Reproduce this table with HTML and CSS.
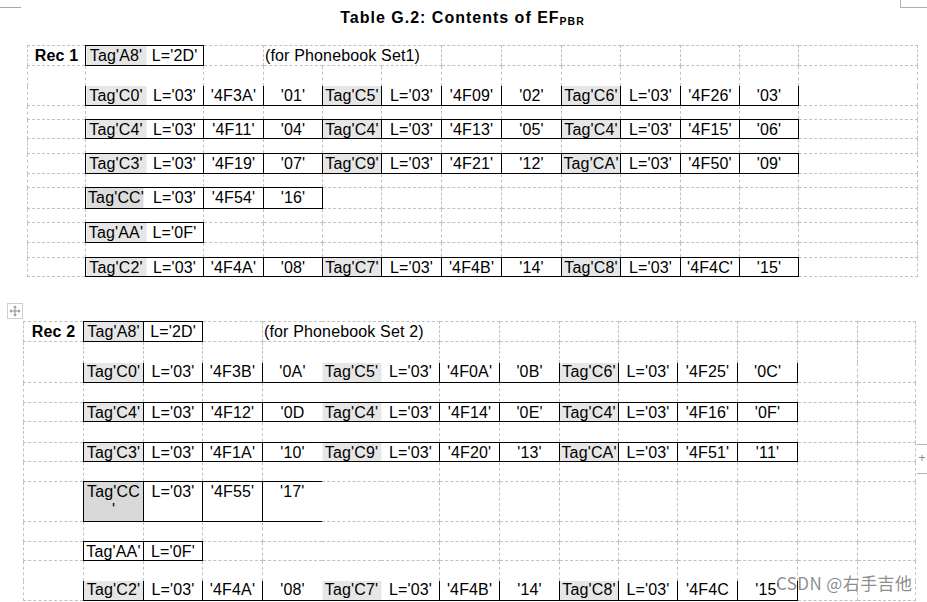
FILE: index.html
```html
<!DOCTYPE html>
<html>
<head>
<meta charset="utf-8">
<title>Table G.2</title>
<link rel="stylesheet" href="styles.css">
</head>
<body>
<div class="page">
  <div class="corner-tl"></div>
  <div class="corner-tr"></div>
  <h1 class="title">Table G.2: Contents of EF<sub>PBR</sub></h1>

  <table class="grid rec1">
    <colgroup>
      <col class="c58"><col class="c118"><col class="c60"><col class="c59"><col class="c59"><col class="c60"><col class="c60"><col class="c60"><col class="c59"><col class="c60"><col class="c59"><col class="c59"><col class="c119">
    </colgroup>
    <tr class="h20"><td class="lbl">Rec 1</td><td class="s dual"><span class="seg a">Tag'A8'</span><span class="seg b">L='2D'</span></td><td></td><td colspan="3" class="note">(for Phonebook Set1)</td><td></td><td></td><td></td><td></td><td></td><td></td><td></td></tr>
    <tr class="h20"><td></td><td></td><td></td><td></td><td></td><td></td><td></td><td></td><td></td><td></td><td></td><td></td><td></td></tr>
    <tr class="h20 open"><td></td><td class="s dual"><span class="seg a">Tag'C0'</span><span class="seg b">L='03'</span></td><td class="s">'4F3A'</td><td class="s">'01'</td><td class="s tg">Tag'C5'</td><td class="s">L='03'</td><td class="s">'4F09'</td><td class="s">'02'</td><td class="s tg">Tag'C6'</td><td class="s">L='03'</td><td class="s">'4F26'</td><td class="s">'03'</td><td></td></tr>
    <tr class="h14"><td></td><td></td><td></td><td></td><td></td><td></td><td></td><td></td><td></td><td></td><td></td><td></td><td></td></tr>
    <tr class="h19"><td></td><td class="s dual"><span class="seg a">Tag'C4'</span><span class="seg b">L='03'</span></td><td class="s">'4F11'</td><td class="s">'04'</td><td class="s tg">Tag'C4'</td><td class="s">L='03'</td><td class="s">'4F13'</td><td class="s">'05'</td><td class="s tg">Tag'C4'</td><td class="s">L='03'</td><td class="s">'4F15'</td><td class="s">'06'</td><td></td></tr>
    <tr class="h15"><td></td><td></td><td></td><td></td><td></td><td></td><td></td><td></td><td></td><td></td><td></td><td></td><td></td></tr>
    <tr class="h20"><td></td><td class="s dual"><span class="seg a">Tag'C3'</span><span class="seg b">L='03'</span></td><td class="s">'4F19'</td><td class="s">'07'</td><td class="s tg">Tag'C9'</td><td class="s">L='03'</td><td class="s">'4F21'</td><td class="s">'12'</td><td class="s tg">Tag'CA'</td><td class="s">L='03'</td><td class="s">'4F50'</td><td class="s">'09'</td><td></td></tr>
    <tr class="h14"><td></td><td></td><td></td><td></td><td></td><td></td><td></td><td></td><td></td><td></td><td></td><td></td><td></td></tr>
    <tr class="h21"><td></td><td class="s dual dark"><span class="seg a">Tag'CC'</span><span class="seg b">L='03'</span></td><td class="s">'4F54'</td><td class="s">'16'</td><td></td><td></td><td></td><td></td><td></td><td></td><td></td><td></td><td></td></tr>
    <tr class="h14"><td></td><td></td><td></td><td></td><td></td><td></td><td></td><td></td><td></td><td></td><td></td><td></td><td></td></tr>
    <tr class="h20"><td></td><td class="s dual"><span class="seg a">Tag'AA'</span><span class="seg b">L='0F'</span></td><td></td><td></td><td></td><td></td><td></td><td></td><td></td><td></td><td></td><td></td><td></td></tr>
    <tr class="h15"><td></td><td></td><td></td><td></td><td></td><td></td><td></td><td></td><td></td><td></td><td></td><td></td><td></td></tr>
    <tr class="h19"><td></td><td class="s dual"><span class="seg a">Tag'C2'</span><span class="seg b">L='03'</span></td><td class="s">'4F4A'</td><td class="s">'08'</td><td class="s tg">Tag'C7'</td><td class="s">L='03'</td><td class="s">'4F4B'</td><td class="s">'14'</td><td class="s tg">Tag'C8'</td><td class="s">L='03'</td><td class="s">'4F4C'</td><td class="s">'15'</td><td></td></tr>
  </table>

  <div class="rec2-wrap">
    <span class="move-handle">
      <svg width="16" height="16" viewBox="0 0 16 16"><rect x="0.5" y="0.5" width="15" height="15" fill="#fff" stroke="#cfcfcf"/><path d="M8 4v8M4 8h8" stroke="#8c8c8c" stroke-width="1"/><path d="M8 2.5l-2 2h4zM8 13.5l-2-2h4zM2.5 8l2-2v4zM13.5 8l-2-2v4z" fill="#8c8c8c"/></svg>
    </span>
    <table class="grid rec2">
      <colgroup>
        <col class="c60"><col class="c60"><col class="c59"><col class="c60"><col class="c59"><col class="c59"><col class="c59"><col class="c60"><col class="c60"><col class="c59"><col class="c59"><col class="c60"><col class="c60"><col class="c60"><col class="c58">
      </colgroup>
      <tr class="h20"><td class="lbl">Rec 2</td><td class="s tg">Tag'A8'</td><td class="s">L='2D'</td><td></td><td colspan="3" class="note">(for Phonebook Set 2)</td><td></td><td></td><td></td><td></td><td></td><td></td><td></td><td></td></tr>
      <tr class="h21"><td></td><td></td><td></td><td></td><td colspan="3"></td><td></td><td></td><td></td><td></td><td></td><td></td><td></td><td></td></tr>
      <tr class="h20 open"><td></td><td class="s tg">Tag'C0'</td><td class="s">L='03'</td><td class="s">'4F3B'</td><td colspan="3" class="s tri"><span class="seg">'0A'</span><span class="seg">Tag'C5'</span><span class="seg">L='03'</span></td><td class="s">'4F0A'</td><td class="s">'0B'</td><td class="s tg">Tag'C6'</td><td class="s">L='03'</td><td class="s">'4F25'</td><td class="s">'0C'</td><td></td><td></td></tr>
      <tr class="h20"><td></td><td></td><td></td><td></td><td colspan="3"></td><td></td><td></td><td></td><td></td><td></td><td></td><td></td><td></td></tr>
      <tr class="h19"><td></td><td class="s tg">Tag'C4'</td><td class="s">L='03'</td><td class="s">'4F12'</td><td colspan="3" class="s tri"><span class="seg">'0D</span><span class="seg">Tag'C4'</span><span class="seg">L='03'</span></td><td class="s">'4F14'</td><td class="s">'0E'</td><td class="s tg">Tag'C4'</td><td class="s">L='03'</td><td class="s">'4F16'</td><td class="s">'0F'</td><td></td><td></td></tr>
      <tr class="h21"><td></td><td></td><td></td><td></td><td colspan="3"></td><td></td><td></td><td></td><td></td><td></td><td></td><td></td><td></td></tr>
      <tr class="h19"><td></td><td class="s tg">Tag'C3'</td><td class="s">L='03'</td><td class="s">'4F1A'</td><td colspan="3" class="s tri"><span class="seg">'10'</span><span class="seg">Tag'C9'</span><span class="seg">L='03'</span></td><td class="s">'4F20'</td><td class="s">'13'</td><td class="s tg">Tag'CA'</td><td class="s">L='03'</td><td class="s">'4F51'</td><td class="s">'11'</td><td></td><td></td></tr>
      <tr class="h20"><td></td><td></td><td></td><td></td><td colspan="3"></td><td></td><td></td><td></td><td></td><td></td><td></td><td></td><td></td></tr>
      <tr class="h40"><td></td><td class="s tgd two">Tag'CC<br>'</td><td class="s">L='03'</td><td class="s">'4F55'</td><td class="s open-r">'17'</td><td colspan="2" class="open-l"></td><td></td><td></td><td></td><td></td><td></td><td></td><td></td><td></td></tr>
      <tr class="h20"><td></td><td></td><td></td><td></td><td colspan="3"></td><td></td><td></td><td></td><td></td><td></td><td></td><td></td><td></td></tr>
      <tr class="h19"><td></td><td class="s">Tag'AA'</td><td class="s">L='0F'</td><td></td><td colspan="3"></td><td></td><td></td><td></td><td></td><td></td><td></td><td></td><td></td></tr>
      <tr class="h20"><td></td><td></td><td></td><td></td><td colspan="3"></td><td></td><td></td><td></td><td></td><td></td><td></td><td></td><td></td></tr>
      <tr class="h20 open"><td></td><td class="s tg">Tag'C2'</td><td class="s">L='03'</td><td class="s">'4F4A'</td><td colspan="3" class="s tri"><span class="seg">'08'</span><span class="seg">Tag'C7'</span><span class="seg">L='03'</span></td><td class="s">'4F4B'</td><td class="s">'14'</td><td class="s tg">Tag'C8'</td><td class="s">L='03'</td><td class="s">'4F4C</td><td class="s">'15'</td><td></td><td></td></tr>
    </table>
  </div>

  <div class="row-handle">+</div>
  <div class="watermark">CSDN @右手吉他</div>
</div>
</body>
</html>
```

FILE: styles.css
```css
* { box-sizing: border-box; }
html, body { margin: 0; padding: 0; background: #fff; }
body { font-family: "Liberation Sans", Arial, sans-serif; color: #000; }

.page { position: relative; width: 927px; height: 602px; overflow: hidden; }

.corner-tl { position: absolute; left: 0; top: 7px; width: 21px; border-top: 1px solid #a8a8a8; }
.corner-tr { position: absolute; left: 900px; top: 0; width: 27px; height: 8px; border-left: 1px solid #b0b0b0; border-bottom: 1px solid #b0b0b0; }

.title {
  margin: 0;
  height: 45px;
  padding-top: 9px;
  padding-right: 2px;
  text-align: center;
  font-size: 16px;
  line-height: 18px;
  font-weight: bold;
  letter-spacing: 1px;
}
.title sub { font-size: 10.5px; line-height: 0; vertical-align: -2px; letter-spacing: 1px; }

.grid { border-collapse: collapse; table-layout: fixed; font-size: 16px; letter-spacing: 0.15px; }
.grid td {
  border: 1px dashed #c2c2c2;
  padding: 3px 0 0;
  line-height: 14px;
  vertical-align: top;
  text-align: center;
  white-space: nowrap;
}
.rec1 { width: 890px; margin-left: 27px; }
.rec2 { width: 892px; }
.rec2 td { padding-top: 2.5px; }

.c58 { width: 58px; } .c59 { width: 59px; } .c60 { width: 60px; }
.c118 { width: 118px; } .c119 { width: 119px; }

.h14 { height: 14px; } .h15 { height: 15px; } .h19 { height: 19px; }
.h20 { height: 20px; } .h21 { height: 21px; } .h40 { height: 40px; }

.grid td.s { border: 1px solid #000; }
.grid .open > td { border-top-style: hidden; }
.grid td.open-r { border-right-style: hidden; }
.grid td.open-l { border-left-style: hidden; }

.lbl { font-weight: bold; }
.grid td.note { text-align: left; padding-left: 1px; }

.grid td.tg { background: #e6e6e6; }
.grid td.tgd { background: #d9d9d9; }
.grid td.two { white-space: normal; line-height: 18px; padding-top: 1px; }

.grid td.dual { text-align: left; background: linear-gradient(90deg, #e6e6e6 60px, #fff 60px); }
.grid td.dual.dark { background: linear-gradient(90deg, #dcdcdc 57px, #fff 57px); }
.dual .seg { display: inline-block; text-align: center; }
.dual .seg.a { width: 60px; }
.dual .seg.b { width: 57px; }

.grid td.tri { text-align: left; background: linear-gradient(90deg, #fff 59px, #e6e6e6 59px, #e6e6e6 118px, #fff 118px); }
.tri .seg { display: inline-block; width: 59px; text-align: center; }

.rec2-wrap { position: relative; margin-top: 44px; margin-left: 23px; }
.move-handle { position: absolute; left: -16px; top: -18px; width: 16px; height: 16px; line-height: 0; }

.row-handle {
  position: absolute; left: 917px; top: 444px; width: 10px; height: 30px;
  border-top: 1px solid #b4b4b4; border-bottom: 1px solid #b4b4b4;
  color: #8a8a8a; font-size: 12px; line-height: 26px; text-align: center;
}

.watermark {
  position: absolute; left: 776px; top: 572px;
  font-family: "Noto Sans CJK SC", "Liberation Sans", sans-serif;
  font-size: 17px; line-height: 22px; letter-spacing: 0.4px;
  color: rgba(120, 120, 120, 0.85);
  white-space: nowrap;
}
```
